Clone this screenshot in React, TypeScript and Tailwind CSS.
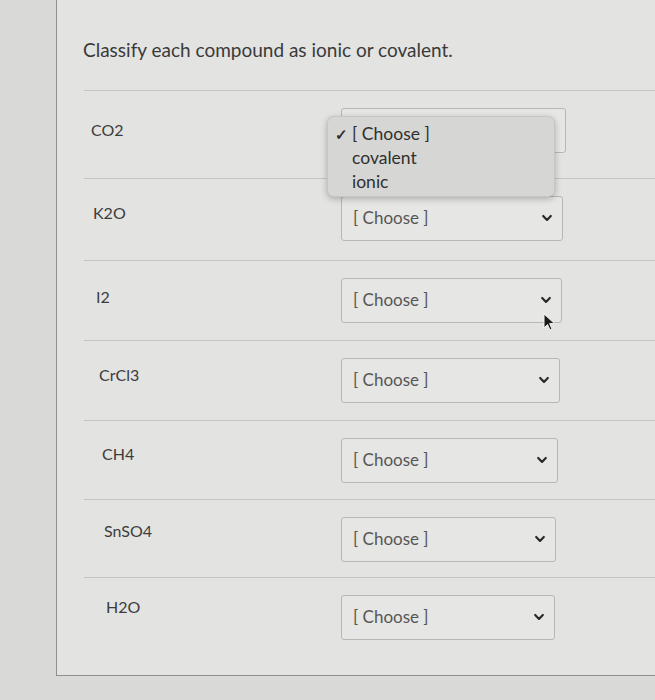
import React from "react";

interface Row {
  name: string;
  height: string;
  labelPad: string;
  labelTop: string;
  selectWidth: string;
}

const rows: Row[] = [
  { name: "CO2", height: "h-[88px]", labelPad: "pl-[34px]", labelTop: "pt-[10px]", selectWidth: "w-[225px]" },
  { name: "K2O", height: "h-[82px]", labelPad: "pl-[36px]", labelTop: "pt-[5px]", selectWidth: "w-[222px]" },
  { name: "I2", height: "h-[80px]", labelPad: "pl-[39px]", labelTop: "pt-[7px]", selectWidth: "w-[221px]" },
  { name: "CrCl3", height: "h-[80px]", labelPad: "pl-[42px]", labelTop: "pt-[5px]", selectWidth: "w-[219px]" },
  { name: "CH4", height: "h-[79px]", labelPad: "pl-[45px]", labelTop: "pt-[4px]", selectWidth: "w-[217px]" },
  { name: "SnSO4", height: "h-[78px]", labelPad: "pl-[47px]", labelTop: "pt-[2px]", selectWidth: "w-[215px]" },
  { name: "H2O", height: "h-[98px]", labelPad: "pl-[49px]", labelTop: "pt-0", selectWidth: "w-[214px]" },
];

const Chevron = () => (
  <svg width="12" height="12" viewBox="0 0 12 12" className="text-[#2a2a2a]">
    <path d="M2.2 4 L6 7.9 L9.8 4" fill="none" stroke="currentColor" strokeWidth="2.2" strokeLinecap="round" strokeLinejoin="round" />
  </svg>
);

const App = () => {
  return (
    <div
      className="relative w-[655px] h-[700px] overflow-hidden bg-[#d9d9d7]"
      style={{ fontFamily: "Lato, 'Open Sans', sans-serif" }}
    >
      {/* question panel */}
      <div className="ml-[56px] h-[676px] border-l border-b border-[#8f8f8f] bg-[#e3e3e1]">
        <div className="pt-[36px] pl-[26px] pb-[25px] text-[19px] text-[#3a3a3a]">
          Classify each compound as ionic or covalent.
        </div>

        {rows.map((row, i) => (
          <div key={row.name} className={`ml-[27px] border-t border-[#c4c4c2] ${row.height}`}>
            <div className="flex items-start pt-[17px]">
              <div className={`w-[284px] ${row.labelPad} ${row.labelTop} text-[16px] text-[#3c3c3c] -ml-[27px]`}>
                {row.name}
              </div>
              <div
                className={`${row.selectWidth} h-[45px] flex items-center justify-between pl-[11px] pr-[9px] border border-[#b7b7b5] rounded-[3px] bg-[#e6e6e4]`}
              >
                <span className="text-[17px] text-[#565656]">{i === 0 ? "" : "[ Choose ]"}</span>
                <Chevron />
              </div>
            </div>
          </div>
        ))}
      </div>

      {/* open dropdown over first select */}
      <div className="absolute left-[327px] top-[116px] w-[228px] h-[81px] rounded-[7px] bg-[#d6d6d4] shadow-[0_2px_6px_rgba(0,0,0,0.25)] border border-[#c6c6c4] pt-[5px] text-[17.5px] text-[#2f2f2f]">
        <div className="flex items-center h-[24px]">
          <span className="w-[24px] pl-[7px] text-[15px] font-bold">✓</span>
          <span>[ Choose ]</span>
        </div>
        <div className="h-[24px] pl-[24px] flex items-center">covalent</div>
        <div className="h-[24px] pl-[24px] flex items-center">ionic</div>
      </div>

      {/* mouse pointer */}
      <svg className="absolute left-[543px] top-[313px]" width="14" height="20" viewBox="0 0 14 20">
        <path d="M1 1 L1 15 L4.5 11.5 L7 17 L9 16 L6.6 10.6 L11.5 10.6 Z" fill="#1a1a1a" stroke="#f2f2f2" strokeWidth="1" />
      </svg>
    </div>
  );
};

export default App;
